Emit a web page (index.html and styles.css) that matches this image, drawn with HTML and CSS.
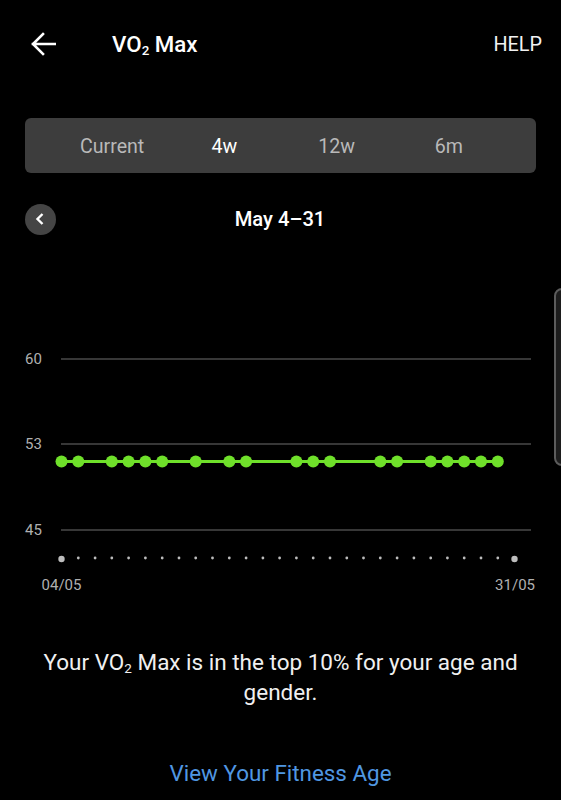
FILE: index.html
```html
<!DOCTYPE html>
<html lang="en">
<head>
  <meta charset="UTF-8">
  <title>VO2 Max</title>
  <link rel="stylesheet" href="styles.css">
</head>
<body>

  <header class="topbar">
    <svg class="back" width="26" height="24" viewBox="0 0 26 24">
      <path d="M25 12H3M13 2L3 12l10 10" fill="none" stroke="#fff" stroke-width="2.6" stroke-linecap="square"/>
    </svg>
    <h1 class="title">VO<sub>2</sub> Max</h1>
    <span class="help">HELP</span>
  </header>

  <nav class="tabs">
    <span class="tab">Current</span>
    <span class="tab active">4w</span>
    <span class="tab">12w</span>
    <span class="tab">6m</span>
  </nav>

  <div class="range">
    <span class="prev">
      <svg width="10" height="14" viewBox="0 0 10 14">
        <path d="M7.5 2L2.5 7l5 5" fill="none" stroke="#fff" stroke-width="2.4"/>
      </svg>
    </span>
    <span class="range-label">May 4–31</span>
    <span></span>
  </div>

  <svg class="chart" width="561" height="270" viewBox="0 0 561 270">
    <!-- Rasterlinien -->
    <g class="grid">
      <line x1="61" y1="29" x2="531" y2="29"/>
      <line x1="61" y1="114" x2="531" y2="114"/>
      <line x1="61" y1="200" x2="531" y2="200"/>
    </g>
    <g class="ylabels">
      <text x="25" y="34">60</text>
      <text x="25" y="119">53</text>
      <text x="25" y="205">45</text>
    </g>

    <!-- Messwerte -->
    <line class="series" x1="61.5" y1="131.5" x2="497.8" y2="131.5"/>
    <g class="points">
      <circle cx="61.5" cy="131.5" r="6"/>
      <circle cx="78.3" cy="131.5" r="6"/>
      <circle cx="111.8" cy="131.5" r="6"/>
      <circle cx="128.6" cy="131.5" r="6"/>
      <circle cx="145.4" cy="131.5" r="6"/>
      <circle cx="162.2" cy="131.5" r="6"/>
      <circle cx="195.7" cy="131.5" r="6"/>
      <circle cx="229.3" cy="131.5" r="6"/>
      <circle cx="246.1" cy="131.5" r="6"/>
      <circle cx="296.4" cy="131.5" r="6"/>
      <circle cx="313.2" cy="131.5" r="6"/>
      <circle cx="330" cy="131.5" r="6"/>
      <circle cx="380.3" cy="131.5" r="6"/>
      <circle cx="397.1" cy="131.5" r="6"/>
      <circle cx="430.7" cy="131.5" r="6"/>
      <circle cx="447.4" cy="131.5" r="6"/>
      <circle cx="464.2" cy="131.5" r="6"/>
      <circle cx="481" cy="131.5" r="6"/>
      <circle cx="497.8" cy="131.5" r="6"/>
    </g>

    <!-- Tage -->
    <g class="days">
      <circle cx="61.5" cy="229" r="3.2"/>
      <circle cx="78.3" cy="228" r="1.4"/>
      <circle cx="95.1" cy="228" r="1.4"/>
      <circle cx="111.8" cy="228" r="1.4"/>
      <circle cx="128.6" cy="228" r="1.4"/>
      <circle cx="145.4" cy="228" r="1.4"/>
      <circle cx="162.2" cy="228" r="1.4"/>
      <circle cx="179" cy="228" r="1.4"/>
      <circle cx="195.7" cy="228" r="1.4"/>
      <circle cx="212.5" cy="228" r="1.4"/>
      <circle cx="229.3" cy="228" r="1.4"/>
      <circle cx="246.1" cy="228" r="1.4"/>
      <circle cx="262.9" cy="228" r="1.4"/>
      <circle cx="279.6" cy="228" r="1.4"/>
      <circle cx="296.4" cy="228" r="1.4"/>
      <circle cx="313.2" cy="228" r="1.4"/>
      <circle cx="330" cy="228" r="1.4"/>
      <circle cx="346.8" cy="228" r="1.4"/>
      <circle cx="363.5" cy="228" r="1.4"/>
      <circle cx="380.3" cy="228" r="1.4"/>
      <circle cx="397.1" cy="228" r="1.4"/>
      <circle cx="413.9" cy="228" r="1.4"/>
      <circle cx="430.7" cy="228" r="1.4"/>
      <circle cx="447.4" cy="228" r="1.4"/>
      <circle cx="464.2" cy="228" r="1.4"/>
      <circle cx="481" cy="228" r="1.4"/>
      <circle cx="497.8" cy="228" r="1.4"/>
      <circle cx="514.5" cy="229" r="3.2"/>
    </g>
    <g class="xlabels">
      <text x="61.5" y="260" text-anchor="middle">04/05</text>
      <text x="535" y="260" text-anchor="end">31/05</text>
    </g>
  </svg>

  <p class="message">Your VO<sub>2</sub> Max is in the top 10% for your age and gender.</p>

  <a class="link" href="#">View Your Fitness Age</a>

  <div class="edge-handle"></div>

</body>
</html>
```

FILE: styles.css
```css
html, body {
  background-color: #000;
}
body {
  margin: 0;
  font-family: Roboto, "Liberation Sans", sans-serif;
  color: #fff;
  overflow: hidden;
}
sub {
  font-size: 0.6em;
  vertical-align: -0.25em;
  line-height: 0;
}
.topbar {
  height: 88px;
  display: flex;
  align-items: center;
  padding: 0 19px 0 30px;
}
.back {
  display: block;
}
.title {
  margin: 0 0 0 56px;
  font-size: 22.3px;
  font-weight: 500;
  flex: 1;
}
.help {
  font-size: 19.8px;
  color: #f2f2f2;
}
.tabs {
  margin: 30px 25px 0;
  height: 55px;
  padding: 0 31px;
  background-color: #3d3d3d;
  border-radius: 6px;
  display: grid;
  grid-template-columns: repeat(4, 1fr);
  align-items: center;
  text-align: center;
  font-size: 19.6px;
  color: #b9b9b9;
}
.tab {
  padding-top: 2px;
}
.tab.active {
  color: #fff;
}
.range {
  margin-top: 30px;
  height: 32px;
  padding: 0 25px;
  display: grid;
  grid-template-columns: 1fr auto 1fr;
  align-items: center;
}
.prev {
  width: 31px;
  height: 31px;
  border-radius: 50%;
  background-color: #454545;
  display: flex;
  align-items: center;
  justify-content: center;
}
.prev svg {
  display: block;
  margin-left: -2px;
}
.range-label {
  font-size: 20.2px;
  font-weight: 500;
  padding-right: 1px;
}
.chart {
  display: block;
  margin-top: 95px;
}
.grid line {
  stroke: #4a4a4a;
  stroke-width: 1.3;
}
.ylabels text, .xlabels text {
  fill: #b0b0b0;
  font-size: 15px;
  font-family: Roboto, "Liberation Sans", sans-serif;
}
.series {
  stroke: #6fe02a;
  stroke-width: 3;
}
.points circle {
  fill: #6fe02a;
}
.days circle {
  fill: #bdbdbd;
}
.message {
  margin: 47px 30px 0;
  text-align: center;
  font-size: 22.5px;
  line-height: 30px;
  color: #f0f0f0;
}
.link {
  display: block;
  margin-top: 51px;
  text-align: center;
  font-size: 22.4px;
  line-height: 30px;
  color: #5097e2;
  text-decoration: none;
}
.edge-handle {
  position: absolute;
  top: 288px;
  left: 554px;
  width: 12px;
  height: 174px;
  border: 2px solid #5c5c5c;
  border-radius: 8px;
  background-color: #1c1c1c;
}
```
